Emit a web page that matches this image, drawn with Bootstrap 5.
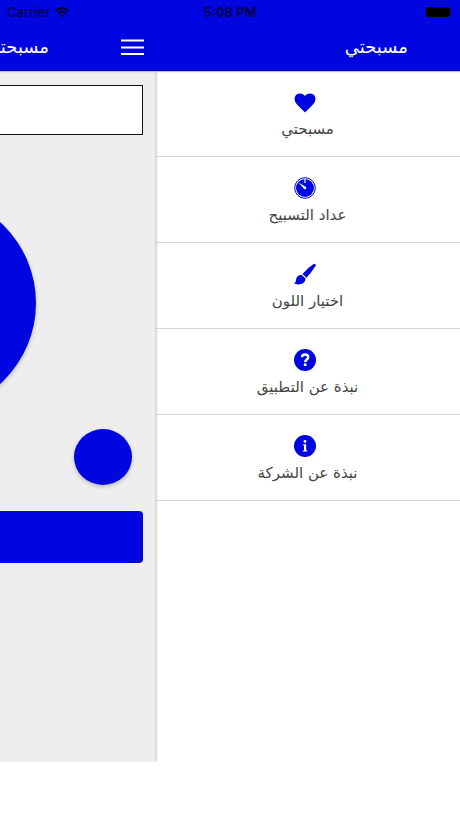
<!DOCTYPE html>
<html lang="ar" dir="ltr">
<head>
<meta charset="utf-8">
<meta name="viewport" content="width=device-width, initial-scale=1">
<title>مسبحتي</title>
<link href="https://cdn.jsdelivr.net/npm/bootstrap@5.3.0/dist/css/bootstrap.min.css" rel="stylesheet">
<style>
:root { --brand: #0006e0; }
body { background: #fff; font-family: "DejaVu Sans", sans-serif; }
.app-head { background: var(--brand); border-bottom: 1px solid #0000a8; box-shadow: 0 1px 1px #bcbce8; position: relative; z-index: 2; }
.status-row { height: 24px; font: 500 13px/24px Inter, sans-serif; color: #00003c; padding: 0 7px; }
.status-row .clock { font-weight: 600; }
.title-row { height: 46px; }
.side { width: 33.7%; flex: none; }
.app-title { font-size: 18px; line-height: 24px; color: #fff; font-weight: 400; white-space: nowrap; }
.side .app-title { margin-right: 72px; }
.menu-title { padding-right: 52px; }
.burger { margin-right: 11px; line-height: 0; }
.counter { background: #eee; height: 691px; box-shadow: 1px 0 3px #bbb; position: relative; z-index: 1; }
.sheet { width: 460px; flex: none; padding: 14px 12px 0; }
.count-box { height: 50px; border: 1px solid #111; border-radius: 0; background: #fff; }
.count-box, .tap, .reset, .save { display: block; }
.tap { width: 222px; height: 220px; background: var(--brand); border: 0; border-radius: 50%; box-shadow: 0 2px 4px #bbb; margin: 58px auto 0; }
.reset { width: 58px; height: 56px; background: var(--brand); border: 0; border-radius: 50%; box-shadow: 0 2px 4px #bbb; margin: 16px 11px 0 auto; }
.save { height: 52px; background: var(--brand); border: 0; border-radius: 4px; margin-top: 26px; }
.menu-link { height: 86px; padding-top: 20px; border-bottom: 1px solid #d8d8d8; color: #444; text-decoration: none; font-size: 15px; line-height: 24px; }
.menu-link svg { margin: 0 6px 2px 0; }
.menu-link:hover { background: #f6f6f6; }
</style>
<script src="https://cdn.jsdelivr.net/npm/bootstrap@5.3.0/dist/js/bootstrap.bundle.min.js" defer></script>
</head>
<body>
<header class="app-head">
  <div class="status-row row g-0">
    <div class="col d-flex align-items-center gap-1"><span>Carrier</span>
      <svg width="16" height="11" viewBox="0 0 16 11" aria-hidden="true"><path d="M1.500 4Q8-1.700 14.500 4M4 6.500Q8 3 12 6.500" fill="none" stroke="#000030" stroke-width="2"/><path d="M8 10.500L5.500 8Q8 6 10.500 8z" fill="#000030"/></svg>
    </div>
    <div class="col-auto clock">5:08 PM</div>
    <div class="col d-flex align-items-center justify-content-end">
      <svg width="27" height="10" viewBox="0 0 27 10" aria-hidden="true"><rect width="24" height="10" rx="1.500" fill="#000"/><path d="M25 3q2 2 0 4z" fill="#000"/></svg>
    </div>
  </div>
  <div class="title-row d-flex">
    <div class="side d-flex align-items-center justify-content-end overflow-hidden">
      <h1 class="app-title mb-0" dir="rtl">مسبحتي</h1>
      <button type="button" class="burger btn p-0 border-0 rounded-0" aria-label="القائمة">
        <svg width="23" height="17" viewBox="0 0 23 17"><path d="M0 1.500H23M0 8.500H23M0 15H23" stroke="#fff" stroke-width="2"/></svg>
      </button>
    </div>
    <div class="flex-fill d-flex align-items-center justify-content-end menu-title">
      <h2 class="app-title mb-0" dir="rtl">مسبحتي</h2>
    </div>
  </div>
</header>
<div class="d-flex">
  <main class="side counter">
    <div class="d-flex justify-content-end overflow-hidden h-100">
      <div class="sheet">
        <input class="count-box w-100" type="text" aria-label="الذكر">
        <button type="button" class="tap" aria-label="تسبيح"></button>
        <button type="button" class="reset" aria-label="تصفير"></button>
        <button type="button" class="save w-100" aria-label="حفظ"></button>
      </div>
    </div>
  </main>
  <nav class="flex-fill" aria-label="القائمة الرئيسية">
    <a href="#tasbih" class="menu-link d-flex flex-column align-items-center">
      <svg width="22" height="24" viewBox="0 0 22 24" aria-hidden="true"><path d="M11 21.500L3 13.500C-1 9.300 0 3 5.500 2.500C8 2.300 10 3.500 11 5C12 3.500 14 2.300 16.500 2.500C22 3 23 9.300 19 13.500z" fill="#0006e0"/></svg>
      <span dir="rtl">مسبحتي</span></a>
    <a href="#counter" class="menu-link d-flex flex-column align-items-center">
      <svg width="22" height="24" viewBox="0 0 22 24" aria-hidden="true"><circle cx="11" cy="11" r="10.300" fill="#fff" stroke="#0006e0"/><circle cx="11" cy="11" r="9" fill="#0006e0"/><path d="M11 2V6" stroke="#fff" stroke-width="1.200"/><path d="M4.500 5.500L12 10Q13 12 11 12.300Q10 12.200 9.500 11.300z" fill="#fff"/></svg>
      <span dir="rtl">عداد التسبيح</span></a>
    <a href="#color" class="menu-link d-flex flex-column align-items-center">
      <svg width="22" height="24" viewBox="0 0 22 24" aria-hidden="true"><path d="M20 .8Q22.500 1 21.500 3Q17 10 12.500 14.800L8.500 11Q14 4.500 20 .8zM7.500 11.800L11.500 15.600Q11.500 20 7 21Q3.500 22 0 20.600Q2 19.500 2 17Q2.500 12 7.500 11.800z" fill="#0006e0"/></svg>
      <span dir="rtl">اختيار اللون</span></a>
    <a href="#about-app" class="menu-link d-flex flex-column align-items-center">
      <svg width="22" height="24" viewBox="0 0 22 24" aria-hidden="true"><circle cx="11" cy="11" r="11" fill="#0006e0"/><path d="M8 8.300Q8 5.500 11 5.500Q14.200 5.500 14.200 8.300Q14.200 9.700 12.500 10.800Q11.200 11.700 11.200 13.200" fill="none" stroke="#fff" stroke-width="2.400"/><rect x="9.900" y="14.500" width="2.600" height="2.500" fill="#fff"/></svg>
      <span dir="rtl">نبذة عن التطبيق</span></a>
    <a href="#about-company" class="menu-link d-flex flex-column align-items-center">
      <svg width="22" height="24" viewBox="0 0 22 24" aria-hidden="true"><circle cx="11" cy="11" r="11" fill="#0006e0"/><circle cx="11" cy="6.500" r="1.400" fill="#fff"/><path d="M9 9.200H12.200V15.500H13.400V16.500H8.800V15.500H10V10.200H9z" fill="#fff"/></svg>
      <span dir="rtl">نبذة عن الشركة</span></a>
  </nav>
</div>
</body>
</html>
